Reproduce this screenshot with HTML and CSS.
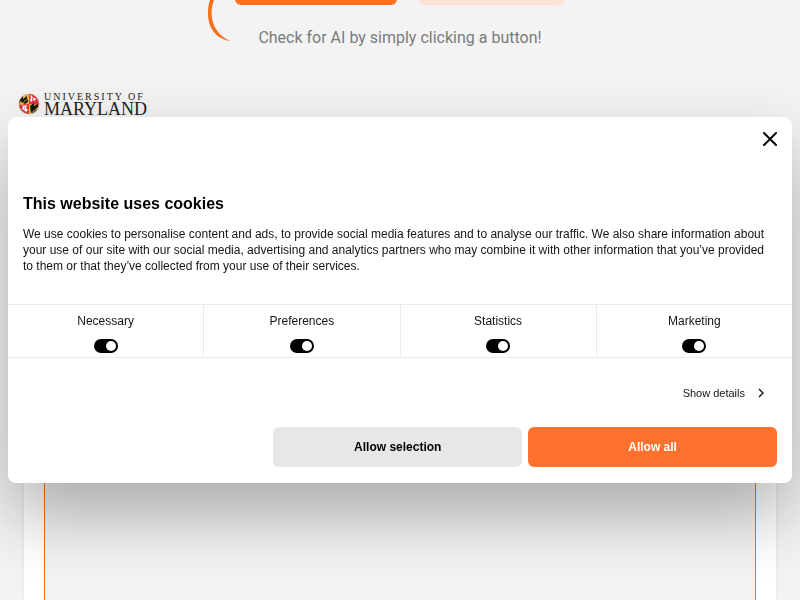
FILE: index.html
```html
<!DOCTYPE html>
<html lang="en">
<head>
    <meta charset="utf-8">
    <title>AI Checker</title>
    <link rel="stylesheet" href="styles.css">
</head>
<body>
    <main class="page">
        <div class="hero">
            <svg class="hero-arc" width="30" height="42" viewBox="0 0 30 42">
                <path d="M3 0C-2 15 1 38 24 41C9 36 0 19 7 0Z" fill="#f57018"/>
            </svg>
            <div class="hero-actions">
                <button class="hero-btn primary" aria-label="Scan text"></button>
                <button class="hero-btn secondary" aria-label="Upload file"></button>
            </div>
            <p class="hero-text">Check for AI by simply clicking a button!</p>
        </div>

        <div class="logo">
            <svg width="22" height="22" viewBox="0 0 22 22">
                <defs>
                    <clipPath id="globe"><circle cx="11" cy="11" r="10"/></clipPath>
                </defs>
                <g clip-path="url(#globe)">
                    <rect width="22" height="22" fill="#e8bb3a"/>
                    <path d="M11 0h11v12L11 11zM0 12l11-1v11H0z" fill="#e0343f"/>
                    <path d="M1 5l4-3v4l4-3v3L4 10l-1-2-3 4zM5 10l5-4v3l-3 2zM12 13l4-3v3l4-2v3l-7 6zM14 20l5-4v2l-4 4z" fill="#1b1714"/>
                    <path d="M12 2l2 1 1 2 3 0-1 3-2-1-2 2-1-2 1-2zM4 12l2 1 3-1-1 3 2 2-2 2-2-2-2-1 1-2z" fill="#fff"/>
                    <path d="M14 5l2 1-2 1zM6 14l1 1-1 1z" fill="#e0343f"/>
                </g>
                <circle cx="11" cy="11" r="10" fill="none" stroke="#a08478" stroke-width="0.5"/>
            </svg>
            <div class="logo-text">
                <span class="logo-top">UNIVERSITY OF</span>
                <span class="logo-name">MARYLAND</span>
            </div>
        </div>

        <div class="editor">
            <div class="editor-box"></div>
        </div>
    </main>

    <div class="cookie-dialog" role="dialog" aria-labelledby="cookie-title">
        <div class="cookie-header">
            <button class="close-btn" aria-label="Close">
                <svg width="14" height="14" viewBox="0 0 14 14">
                    <path d="M1 1l12 12M13 1L1 13" stroke="#000" stroke-width="2" stroke-linecap="round"/>
                </svg>
            </button>
        </div>

        <div class="cookie-body">
            <h2 class="cookie-title" id="cookie-title">This website uses cookies</h2>
            <p class="cookie-text">We use cookies to personalise content and ads, to provide social media features and to analyse our traffic. We also share information about your use of our site with our social media, advertising and analytics partners who may combine it with other information that you’ve provided to them or that they’ve collected from your use of their services.</p>
        </div>

        <div class="cookie-types">
            <div class="cookie-type">
                <label for="necessary">Necessary</label>
                <input class="switch" type="checkbox" id="necessary" checked>
            </div>
            <div class="cookie-type">
                <label for="preferences">Preferences</label>
                <input class="switch" type="checkbox" id="preferences" checked>
            </div>
            <div class="cookie-type">
                <label for="statistics">Statistics</label>
                <input class="switch" type="checkbox" id="statistics" checked>
            </div>
            <div class="cookie-type">
                <label for="marketing">Marketing</label>
                <input class="switch" type="checkbox" id="marketing" checked>
            </div>
        </div>

        <div class="cookie-details">
            <a class="details-link" href="#">
                Show details
                <svg width="6" height="10" viewBox="0 0 6 10">
                    <path d="M1 1l4 4-4 4" fill="none" stroke="#141414" stroke-width="1.4"/>
                </svg>
            </a>
        </div>

        <div class="cookie-actions">
            <button class="btn btn-selection">Allow selection</button>
            <button class="btn btn-all">Allow all</button>
        </div>
    </div>
</body>
</html>
```
FILE: styles.css
```css
* {
    box-sizing: border-box;
}

body {
    margin: 0;
    background: #f3f3f3;
    font-family: "Liberation Sans", Arial, sans-serif;
}

.page {
    min-height: 100vh;
    display: flex;
    flex-direction: column;
}

.hero {
    position: relative;
    text-align: center;
}

.hero-arc {
    position: absolute;
    left: 50%;
    top: 0;
    margin-left: -193px;
}

.hero-actions {
    display: flex;
    justify-content: center;
    align-items: flex-end;
    gap: 21px;
    height: 5px;
    overflow: hidden;
}

.hero-btn {
    flex-shrink: 0;
    height: 48px;
    border: none;
    border-radius: 6px;
    cursor: pointer;
}

.hero-btn.primary {
    width: 162px;
    background: #ff701f;
}

.hero-btn.secondary {
    width: 147px;
    background: #fde2d8;
}

.hero-text {
    margin: 21px 0 0;
    font-family: Roboto, sans-serif;
    font-size: 16px;
    line-height: 24px;
    color: #7b7b7b;
}

.logo {
    display: flex;
    align-items: center;
    gap: 4px;
    padding: 42px 18px 0;
}

.logo-text {
    display: flex;
    flex-direction: column;
    font-family: "Liberation Serif", "Times New Roman", serif;
    color: #222;
}

.logo-top {
    font-size: 10px;
    line-height: 10px;
    letter-spacing: 2px;
}

.logo-name {
    font-size: 18px;
    line-height: 14px;
}

.editor {
    flex: 1;
    display: flex;
    margin: 60px 24px 0;
    padding: 20px 20px 0;
    background: #fff;
    box-shadow: 0 0 4px rgba(0, 0, 0, 0.08);
}

.editor-box {
    flex: 1;
    border: 1px solid #f57018;
    border-bottom: none;
    background: #f3f3f3;
}

.cookie-dialog {
    position: fixed;
    top: 50%;
    left: 8px;
    right: 8px;
    transform: translateY(-50%);
    background: #fff;
    border-radius: 8px;
    box-shadow: 0 32px 68px rgba(0, 0, 0, 0.3);
    color: #141414;
}

.cookie-header {
    display: flex;
    justify-content: flex-end;
    padding: 15px;
}

.close-btn {
    display: flex;
    padding: 0;
    border: none;
    background: none;
    cursor: pointer;
}

.cookie-body {
    padding: 33px 15px 30px;
}

.cookie-title {
    margin: 0 0 12px;
    font-size: 16px;
    line-height: 20px;
    color: #000;
}

.cookie-text {
    margin: 0;
    font-size: 12px;
    line-height: 16px;
}

.cookie-types {
    display: flex;
    border-top: 1px solid #ebebeb;
    border-bottom: 1px solid #ebebeb;
}

.cookie-type {
    flex: 1;
    display: flex;
    flex-direction: column;
    align-items: center;
    gap: 10px;
    padding: 8px 0 4px;
    border-right: 1px solid #ebebeb;
    font-size: 12px;
    line-height: 16px;
}

.cookie-type:last-child {
    border-right: none;
}

.switch {
    appearance: none;
    display: flex;
    align-items: center;
    width: 24px;
    height: 14px;
    margin: 0;
    padding: 2px;
    border-radius: 7px;
    background: #767676;
    cursor: pointer;
}

.switch::before {
    content: "";
    width: 10px;
    height: 10px;
    border-radius: 50%;
    background: #fff;
}

.switch:checked {
    justify-content: flex-end;
    background: #000;
}

.cookie-details {
    display: flex;
    justify-content: flex-end;
    padding: 27px 28px 26px;
}

.details-link {
    display: flex;
    align-items: center;
    gap: 13px;
    font-size: 11px;
    line-height: 16px;
    color: #141414;
    text-decoration: none;
}

.cookie-actions {
    display: flex;
    justify-content: flex-end;
    gap: 6px;
    padding: 0 15px 16px;
}

.btn {
    width: 33%;
    height: 40px;
    border: none;
    border-radius: 6px;
    font-family: inherit;
    font-size: 12px;
    font-weight: bold;
    cursor: pointer;
}

.btn-selection {
    background: #e7e7e7;
    color: #000;
}

.btn-all {
    background: #ff712d;
    color: #fff;
}
```
